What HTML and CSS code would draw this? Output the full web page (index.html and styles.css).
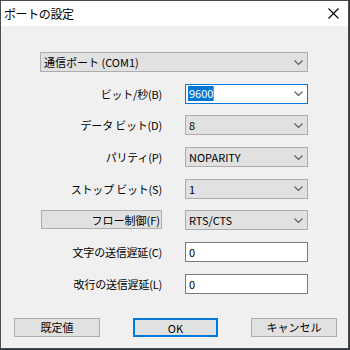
FILE: index.html
```html
<!DOCTYPE html>
<html lang="ja">
<head>
  <meta charset="UTF-8" />
  <title>ポートの設定</title>
  <link rel="stylesheet" href="styles.css">
</head>
<body>

  <div class="window">
    <div class="titlebar">
      <span class="title">ポートの設定</span>
      <svg class="close" width="11" height="11" viewBox="0 0 11 11">
        <path d="M0.5 0.5 L10.5 10.5 M10.5 0.5 L0.5 10.5" stroke="#000" stroke-width="1.1" fill="none"/>
      </svg>
    </div>

    <div class="content">
      <div class="form">
        <div class="combo wide">
          <span>通信ポート (COM1)</span>
          <svg class="chev" width="9" height="5" viewBox="0 0 9 5"><polyline points="0.5,0.5 4.5,4.5 8.5,0.5" /></svg>
        </div>

        <label class="label">ビット/秒(B)</label>
        <div class="combo focused">
          <span class="selected">9600</span>
          <svg class="chev" width="9" height="5" viewBox="0 0 9 5"><polyline points="0.5,0.5 4.5,4.5 8.5,0.5" /></svg>
        </div>

        <label class="label">データ ビット(D)</label>
        <div class="combo">
          <span>8</span>
          <svg class="chev" width="9" height="5" viewBox="0 0 9 5"><polyline points="0.5,0.5 4.5,4.5 8.5,0.5" /></svg>
        </div>

        <label class="label">パリティ(P)</label>
        <div class="combo">
          <span>NOPARITY</span>
          <svg class="chev" width="9" height="5" viewBox="0 0 9 5"><polyline points="0.5,0.5 4.5,4.5 8.5,0.5" /></svg>
        </div>

        <label class="label">ストップ ビット(S)</label>
        <div class="combo">
          <span>1</span>
          <svg class="chev" width="9" height="5" viewBox="0 0 9 5"><polyline points="0.5,0.5 4.5,4.5 8.5,0.5" /></svg>
        </div>

        <button class="flow-btn">フロー制御(F)</button>
        <div class="combo">
          <span>RTS/CTS</span>
          <svg class="chev" width="9" height="5" viewBox="0 0 9 5"><polyline points="0.5,0.5 4.5,4.5 8.5,0.5" /></svg>
        </div>

        <label class="label">文字の送信遅延(C)</label>
        <div class="textbox">0</div>

        <label class="label">改行の送信遅延(L)</label>
        <div class="textbox">0</div>
      </div>

      <div class="buttons">
        <button class="btn">既定値</button>
        <button class="btn default">OK</button>
        <button class="btn">キャンセル</button>
      </div>
    </div>
  </div>

</body>
</html>
```

FILE: styles.css
```css
:root {
  --face: #f0f0f0;
  --ctrl: #e1e1e1;
  --ctrl-border: #adadad;
  --accent: #0078d7;
}

body {
  margin: 0;
  width: 350px;
  height: 350px;
  background-color: #2f343b;
  font-family: "Noto Sans CJK JP", "Noto Sans", sans-serif;
  font-size: 11px;
  color: #000;
}

.window {
  box-sizing: border-box;
  width: 349px;
  height: 349px;
  border: 1px solid #4c4c4c;
  background-color: var(--face);
}

.titlebar {
  height: 25px;
  background-color: #fff;
  display: flex;
  align-items: center;
  justify-content: space-between;
  padding: 0 9px 0 3px;
}

.title {
  font-size: 12px;
  letter-spacing: -0.4px;
}

.content {
  padding: 26px 0 0 39px;
}

.form {
  display: grid;
  grid-template-columns: 122px 123px;
  column-gap: 23px;
  grid-auto-rows: 20px;
  row-gap: 11.7px;
}

.wide {
  grid-column: 1 / 3;
}

.label {
  display: flex;
  align-items: center;
  justify-content: flex-end;
  white-space: nowrap;
  letter-spacing: -0.2px;
}

.combo,
.textbox {
  box-sizing: border-box;
  height: 20px;
  display: flex;
  align-items: center;
  justify-content: space-between;
  padding: 0 4px 0 3px;
}

.combo {
  background-color: var(--ctrl);
  border: 1px solid var(--ctrl-border);
}

.combo.focused {
  background-color: #fff;
  border-color: var(--accent);
  padding-left: 2px;
}

.selected {
  background-color: var(--accent);
  color: #fff;
  padding: 0 0 0 1px;
  line-height: 15px;
  border-right: 1px solid #f07a22;
}

.chev polyline {
  fill: none;
  stroke: #606060;
  stroke-width: 1.2;
}

.textbox {
  background-color: #fff;
  border: 1px solid #7a7a7a;
}

.flow-btn {
  box-sizing: border-box;
  height: 19px;
  margin: 0 0 0 1px;
  font: inherit;
  color: #000;
  background-color: var(--ctrl);
  border: 1px solid var(--ctrl-border);
  text-align: right;
  padding: 0 1px 0 0;
  white-space: nowrap;
}

.buttons {
  display: flex;
  gap: 33px;
  margin: 24px 0 0 -26px;
}

.btn {
  box-sizing: border-box;
  width: 86px;
  height: 19px;
  padding: 0;
  font: inherit;
  color: #000;
  background-color: var(--ctrl);
  border: 1px solid var(--ctrl-border);
}

.btn.default {
  width: 85px;
  border: 2px solid var(--accent);
}
```
